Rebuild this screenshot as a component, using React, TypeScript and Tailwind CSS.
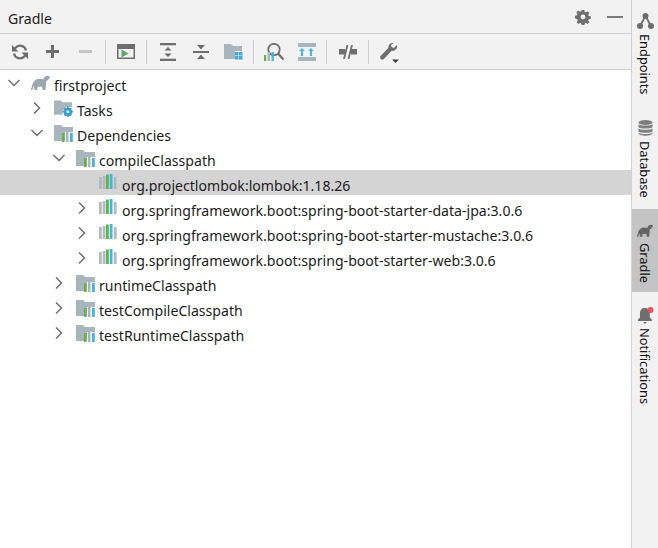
import React from "react";

const GRAY = "#6e6e6e";

const Elephant = ({ color = "#9aa7b0", width = 19, height = 15 }: { color?: string; width?: number; height?: number }) => (
  <svg width={width} height={height} viewBox="0 0 19 15">
    <path
      fill={color}
      d="M0 15c0-1 .3-2 .8-3C1.500 7 4.500 3.800 8.500 3.800c1.500 0 2.700.4 3.700.6C13 2.200 14.700.8 16.500.8c1.300 0 2.300.7 2.500 1.700.1.600-.4 1-1 .8-.3 1.500-1.300 2.400-2.700 2.500-.2 2.800-.5 5.500-.8 9.200h-3l-.5-3.600c-1.400.5-3 .5-4.300.1L6.200 15H3.400l-.6-4.300C2.100 12 1.700 13.500 1.700 15z"
    />
  </svg>
);

const Bars = () => (
  <svg width="18" height="15" viewBox="0 0 18 15" className="-translate-y-px">
    <rect x="0" y="3" width="2.800" height="12" fill="#b3babf" />
    <rect x="3.700" y="2" width="2.800" height="13" fill="#b3babf" />
    <rect x="7" y="0.500" width="2.800" height="14.500" fill="#62b543" />
    <rect x="10.700" y="0" width="2.800" height="15" fill="#40b6e0" />
    <rect x="14.800" y="3" width="2.800" height="12" fill="#b3babf" />
  </svg>
);

const FolderBars = () => (
  <svg width="20" height="17" viewBox="0 0 20 17" className="translate-y-px">
    <path fill="#a9b5bd" d="M0 0h7l2 2h10v5h-8v9H0z" />
    <rect x="8" y="8" width="2.500" height="9" fill="#62b543" />
    <rect x="12" y="6" width="2.500" height="11" fill="#a9b5bd" />
    <rect x="16" y="8" width="2.800" height="9" fill="#40b6e0" />
  </svg>
);

const FolderGear = () => (
  <svg width="21" height="18" viewBox="0 0 21 18" className="translate-y-px">
    <path fill="#a9b5bd" d="M0 0h7l2 2h10v5h-6l-4 4v4H0z" />
    <circle cx="14.500" cy="12" r="3.400" fill="none" stroke="#389fd6" strokeWidth="2.400" />
    <path stroke="#389fd6" strokeWidth="1.600" d="M14.500 6.500v11M9 12h11M10.800 8.300l7.400 7.400M18.200 8.300l-7.400 7.400" />
    <circle cx="14.500" cy="12" r="1.400" fill="#fff" />
  </svg>
);

const Chevron = ({ open }: { open?: boolean }) => (
  <svg width="14" height="14" viewBox="0 0 14 14" fill="none" stroke={GRAY} strokeWidth="1.500">
    {open ? <path d="M1.500 4l5.500 5.500L12.500 4" /> : <path d="M4 1.500L9.500 7 4 12.500" />}
  </svg>
);

const Row = ({
  indent,
  open,
  leaf,
  icon,
  label,
  selected,
}: {
  indent: string;
  open?: boolean;
  leaf?: boolean;
  icon: React.ReactNode;
  label: string;
  selected?: boolean;
}) => (
  <div className={`flex h-[25px] items-center ${indent} ${selected ? "bg-[#d4d4d4]" : ""}`}>
    <span className="flex w-[14px] shrink-0 justify-center">{leaf ? null : <Chevron open={open} />}</span>
    <span className="ml-[10px] flex w-[20px] shrink-0 justify-start">{icon}</span>
    <span className="ml-[3px] whitespace-nowrap pt-[6px]">{label}</span>
  </div>
);

const ToolBtn = ({ children }: { children: React.ReactNode }) => (
  <div className="flex h-full w-[33px] items-center justify-center">{children}</div>
);

const Sep = ({ margin }: { margin: string }) => <div className={`h-[24px] w-px bg-[#cdcdcd] ${margin}`} />;

const SideTab = ({
  icon,
  label,
  active,
  box,
}: {
  icon: React.ReactNode;
  label: string;
  active?: boolean;
  box: string;
}) => (
  <div className={`flex flex-col items-center ${box} ${active ? "bg-[#c4c4c4]" : ""}`}>
    <div className="flex h-[16px] items-center">{icon}</div>
    <span className="mt-[5px] text-[12.8px] leading-[18px] [writing-mode:vertical-rl]">{label}</span>
  </div>
);

export default function App() {
  return (
    <div className="flex h-[548px] w-[658px] overflow-hidden bg-white font-['Noto_Sans',sans-serif] text-[14.1px] text-[#1c1c1c]">
      <div className="flex w-[631px] flex-col">
        <div className="flex h-[34px] shrink-0 items-center justify-between border-b border-[#d1d1d1] bg-[#f2f2f2] pl-[8px] pr-[8px]">
          <span className="pt-[4px]">Gradle</span>
          <div className="flex items-center gap-[16px]">
            <svg width="16" height="16" viewBox="0 0 18 18">
              <path
                fill={GRAY}
                d="M7.500 1h3l.4 2.200 1.300.6 1.900-1.300 2.100 2.100-1.300 1.900.6 1.300 2.200.4v3l-2.200.4-.6 1.300 1.300 1.900-2.100 2.100-1.900-1.300-1.300.6-.4 2.200h-3l-.4-2.200-1.300-.6-1.900 1.300-2.100-2.100 1.300-1.900-.6-1.300L0 10.500v-3l2.200-.4.6-1.300L1.500 3.900l2.100-2.100 1.900 1.300 1.300-.6zM9 6.300a2.700 2.700 0 1 0 0 5.400 2.700 2.700 0 0 0 0-5.400z"
              />
            </svg>
            <div className="h-[2px] w-[16px] bg-[#7a7a7a]" />
          </div>
        </div>

        <div className="flex h-[36px] shrink-0 items-center border-b border-[#d1d1d1] bg-[#f2f2f2] pl-[3px]">
          <ToolBtn>
            <svg width="16" height="16" viewBox="0 0 16 16" fill="none" stroke={GRAY} strokeWidth="2.200">
              <path d="M14 6.500A6 6 0 0 0 3.500 3.800L2 5.500" />
              <path d="M2 9.500a6 6 0 0 0 10.500 2.700l1.500-1.700" />
              <path fill={GRAY} stroke="none" d="M0 1v6.500h6.500zM16 15V8.500H9.500z" />
            </svg>
          </ToolBtn>
          <ToolBtn>
            <svg width="13" height="13" viewBox="0 0 13 13" fill={GRAY}>
              <path d="M5 0h3v5h5v3H8v5H5V8H0V5h5z" />
            </svg>
          </ToolBtn>
          <ToolBtn>
            <div className="h-[3px] w-[13px] bg-[#c6c6c6]" />
          </ToolBtn>
          <Sep margin="mx-[3px]" />
          <ToolBtn>
            <svg width="18" height="15" viewBox="0 0 18 15">
              <path fill={GRAY} d="M0 0h18v15H0zM1.500 5v8.500h15V5z" />
              <path fill="#59a869" d="M4.500 5.500l7 4-7 4z" />
            </svg>
          </ToolBtn>
          <Sep margin="mx-[4px]" />
          <ToolBtn>
            <svg width="16" height="18" viewBox="0 0 16 18" fill={GRAY}>
              <rect x="0" y="0" width="16" height="2.300" />
              <rect x="0" y="15.700" width="16" height="2.300" />
              <path d="M8 4l3.500 3.500h-7zM8 14l3.500-3.500h-7z" />
            </svg>
          </ToolBtn>
          <ToolBtn>
            <svg width="16" height="18" viewBox="0 0 16 18" fill={GRAY}>
              <rect x="0" y="8" width="16" height="2" />
              <path d="M8 6.500L4 2h8zM8 11.500l4 4.500H4z" />
            </svg>
          </ToolBtn>
          <ToolBtn>
            <svg width="19" height="18" viewBox="0 0 19 18">
              <path fill="#a9b5bd" d="M0 1h7l2 2h9v5h-7v8H0z" />
              <path fill="#40a9e0" d="M11 9h3.500v3.500H11zM15 9h3.500v3.500H15zM11 13h3.500v3.500H11zM15 13h3.500v3.500H15z" />
            </svg>
          </ToolBtn>
          <Sep margin="mx-[3px]" />
          <ToolBtn>
            <svg width="20" height="18" viewBox="0 0 20 18">
              <circle cx="10" cy="6.500" r="5.700" fill="none" stroke={GRAY} strokeWidth="1.800" />
              <path stroke={GRAY} strokeWidth="2.200" d="M14 10.500l5.500 6" />
              <rect x="0" y="12" width="2.200" height="6" fill="#62b543" />
              <rect x="3.600" y="9" width="2.400" height="9" fill="#a9b5bd" />
              <rect x="7.500" y="9" width="2.400" height="9" fill="#40b6e0" />
            </svg>
          </ToolBtn>
          <ToolBtn>
            <svg width="18" height="18" viewBox="0 0 18 18">
              <rect x="0" y="0" width="18" height="4" fill="#a9b5bd" />
              <rect x="0" y="14" width="18" height="4" fill="#a9b5bd" />
              <path fill="#40b6e0" d="M4 5l2.800 3H5v5H3V8H1.200zM13 5l2.800 3H14v5h-2V8h-1.800z" />
            </svg>
          </ToolBtn>
          <Sep margin="ml-[3px] mr-[4px]" />
          <ToolBtn>
            <svg width="18" height="14" viewBox="0 0 18 14">
              <path fill={GRAY} d="M0 4h6v5.500H0zM12 4h6v5.500h-6z" />
              <path stroke={GRAY} strokeWidth="1.800" d="M5 14L8.500 0M9.500 14L13 0" />
            </svg>
          </ToolBtn>
          <Sep margin="ml-[4px] mr-[4px]" />
          <ToolBtn>
            <svg width="20" height="20" viewBox="0 0 20 20" className="translate-y-px">
              <path
                fill={GRAY}
                d="M12.500 0c-2.700 0-4.500 2.300-4 4.800L.8 12.700c-1 1-1 2.300 0 3.200.9.900 2.200.9 3.100 0l7.700-8.100c2.900.7 5.400-1.300 5.400-4.200 0-.6-.1-1-.2-1.500l-2.900 2.800-2.400-.8-.6-2.200L13.600.1C13.200 0 12.900 0 12.500 0z"
              />
              <path fill="#3c3c3c" d="M12 16.500h7L15.500 20z" />
            </svg>
          </ToolBtn>
        </div>

        <div className="flex-1 bg-white">
          <Row indent="pl-[7px]" open icon={<Elephant />} label="firstproject" />
          <Row indent="pl-[30px]" icon={<FolderGear />} label="Tasks" />
          <Row indent="pl-[30px]" open icon={<FolderBars />} label="Dependencies" />
          <Row indent="pl-[52px]" open icon={<FolderBars />} label="compileClasspath" />
          <Row indent="pl-[75px]" leaf selected icon={<Bars />} label="org.projectlombok:lombok:1.18.26" />
          <Row indent="pl-[75px]" icon={<Bars />} label="org.springframework.boot:spring-boot-starter-data-jpa:3.0.6" />
          <Row indent="pl-[75px]" icon={<Bars />} label="org.springframework.boot:spring-boot-starter-mustache:3.0.6" />
          <Row indent="pl-[75px]" icon={<Bars />} label="org.springframework.boot:spring-boot-starter-web:3.0.6" />
          <Row indent="pl-[52px]" icon={<FolderBars />} label="runtimeClasspath" />
          <Row indent="pl-[52px]" icon={<FolderBars />} label="testCompileClasspath" />
          <Row indent="pl-[52px]" icon={<FolderBars />} label="testRuntimeClasspath" />
        </div>
      </div>

      <div className="flex w-[27px] flex-col border-l border-[#d1d1d1] bg-[#f2f2f2] text-[#111]">
        <SideTab
          box="h-[105px] pt-[13px]"
          label="Endpoints"
          icon={
            <svg width="17" height="16" viewBox="0 0 17 16" fill={GRAY}>
              <circle cx="8.500" cy="3" r="3" />
              <circle cx="3" cy="13" r="3" />
              <circle cx="14" cy="13" r="3" />
              <path stroke={GRAY} strokeWidth="1.800" fill="none" d="M8.500 3L3 13M8.500 3L14 13" />
            </svg>
          }
        />
        <SideTab
          box="h-[104px] pt-[15px]"
          label="Database"
          icon={
            <svg width="15" height="16" viewBox="0 0 15 16" fill="#7f7f7f">
              <ellipse cx="7.500" cy="2.500" rx="7" ry="2.500" />
              <path d="M.5 4c1 2 13 2 14 0v3c-1 2-13 2-14 0zM.5 8.300c1 2 13 2 14 0v3c-1 2-13 2-14 0zM.5 12.500c1 2 13 2 14 0v1c-1 3-13 3-14 0z" />
            </svg>
          }
        />
        <SideTab box="h-[83px] pt-[13px]" active label="Gradle" icon={<Elephant color="#666666" width={16} height={13} />} />
        <SideTab
          box="h-[115px] pt-[15px]"
          label="Notifications"
          icon={
            <svg width="17" height="17" viewBox="0 0 17 17">
              <path fill={GRAY} d="M8 1c3 0 4.800 2 4.800 5v4.500l2 2V14H1v-1.500l2-2V6c0-3 2-5 5-5zM6 15h4l-2 2z" />
              <circle cx="13.500" cy="3" r="3" fill="#e5545b" />
            </svg>
          }
        />
      </div>
    </div>
  );
}
